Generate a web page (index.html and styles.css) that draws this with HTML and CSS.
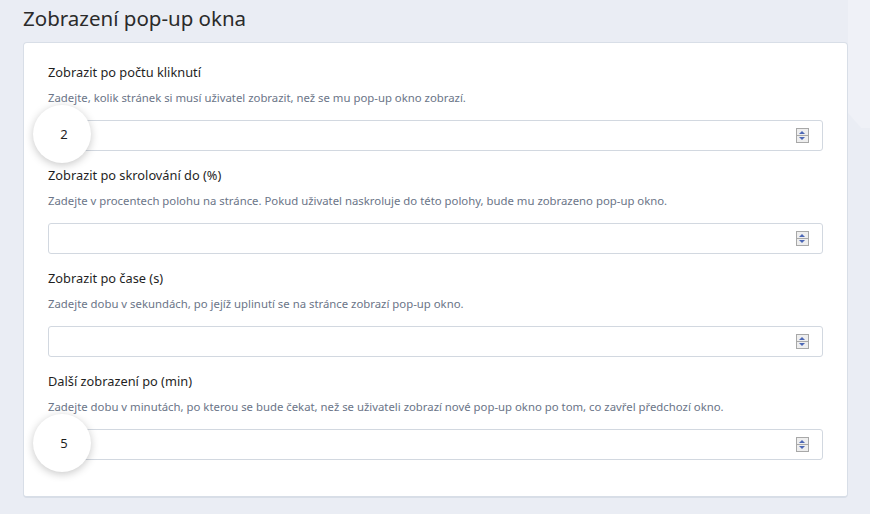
FILE: index.html
```html
<!DOCTYPE html>
<html lang="cs">
<head>
  <meta charset="UTF-8">
  <title>Zobrazení pop-up okna</title>
  <link rel="stylesheet" href="styles.css">
</head>
<body>

  <h1>Zobrazení pop-up okna</h1>

  <div class="karta">
    <div class="skupina">
      <label>Zobrazit po počtu kliknutí</label>
      <p class="napoveda">Zadejte, kolik stránek si musí uživatel zobrazit, než se mu pop-up okno zobrazí.</p>
      <div class="pole">
        <div class="lupa">2</div>
        <div class="spin"><span class="nahoru"></span><span class="dolu"></span></div>
      </div>
    </div>

    <div class="skupina">
      <label>Zobrazit po skrolování do (%)</label>
      <p class="napoveda">Zadejte v procentech polohu na stránce. Pokud uživatel naskroluje do této polohy, bude mu zobrazeno pop-up okno.</p>
      <div class="pole">
        <div class="spin"><span class="nahoru"></span><span class="dolu"></span></div>
      </div>
    </div>

    <div class="skupina">
      <label>Zobrazit po čase (s)</label>
      <p class="napoveda">Zadejte dobu v sekundách, po jejíž uplinutí se na stránce zobrazí pop-up okno.</p>
      <div class="pole">
        <div class="spin"><span class="nahoru"></span><span class="dolu"></span></div>
      </div>
    </div>

    <div class="skupina">
      <label>Další zobrazení po (min)</label>
      <p class="napoveda">Zadejte dobu v minutách, po kterou se bude čekat, než se uživateli zobrazí nové pop-up okno po tom, co zavřel předchozí okno.</p>
      <div class="pole">
        <div class="lupa">5</div>
        <div class="spin"><span class="nahoru"></span><span class="dolu"></span></div>
      </div>
    </div>
  </div>

</body>
</html>
```

FILE: styles.css
```css
body {
  font-family: 'Noto Sans', 'Open Sans', sans-serif;
  background: #eaedf4;
  color: #222;
  margin: 0;
  padding: 5px 0 0 23px;
  position: relative;
  min-height: 509px;
}

/* svetlejsi pruh vpravo za kartou */
body::before {
  content: "";
  position: absolute;
  right: 0;
  top: 0;
  width: 22px;
  height: 128px;
  background: #eff1f7;
  clip-path: polygon(0 0, 100% 0, 100% 100%, 60% 100%, 0 88%);
}

h1 {
  font-size: 20.5px;
  font-weight: normal;
  line-height: 26px;
  margin: 0;
  color: #2b2b2b;
  position: relative;
}

.karta {
  position: relative;
  width: 775px;
  margin-top: 11px;
  padding: 19px 24px 36px 24px;
  background: white;
  border: 1px solid #d8dee7;
  border-bottom-width: 2px;
  border-radius: 4px;
}

.skupina {
  margin-bottom: 14px;
}

.skupina:last-child {
  margin-bottom: 0;
}

label {
  display: block;
  font-size: 12.8px;
  line-height: 20px;
  color: #1f1f1f;
}

.napoveda {
  font-size: 11.35px;
  line-height: 16px;
  color: #6b7588;
  margin: 8px 0 14px 0;
}

.pole {
  position: relative;
  height: 29px;
  border: 1px solid #d2d8e0;
  border-radius: 3px;
  display: flex;
  align-items: center;
  justify-content: flex-end;
  padding-right: 13px;
}

.spin {
  width: 11px;
  height: 13px;
  border: 1px solid #a8a8a8;
  display: flex;
  flex-direction: column;
  background: #a8a8a8;
  gap: 1px;
}

.spin span {
  flex: 1;
  background: #eeeeee;
  position: relative;
}

.spin span::after {
  content: "";
  position: absolute;
  left: 2px;
  top: 2px;
  border-left: 3.5px solid transparent;
  border-right: 3.5px solid transparent;
}

.spin .nahoru::after {
  border-bottom: 3px solid #4c67b5;
}

.spin .dolu::after {
  top: 1px;
  border-top: 3px solid #4c67b5;
}

.lupa {
  position: absolute;
  left: -16px;
  top: -16px;
  width: 58px;
  height: 58px;
  border-radius: 50%;
  background: white;
  box-shadow: 0 2px 8px rgba(0,0,0,0.22);
  display: flex;
  align-items: center;
  justify-content: center;
  font-size: 13px;
  color: #1f1f1f;
  padding-left: 4px;
  box-sizing: border-box;
}
```
